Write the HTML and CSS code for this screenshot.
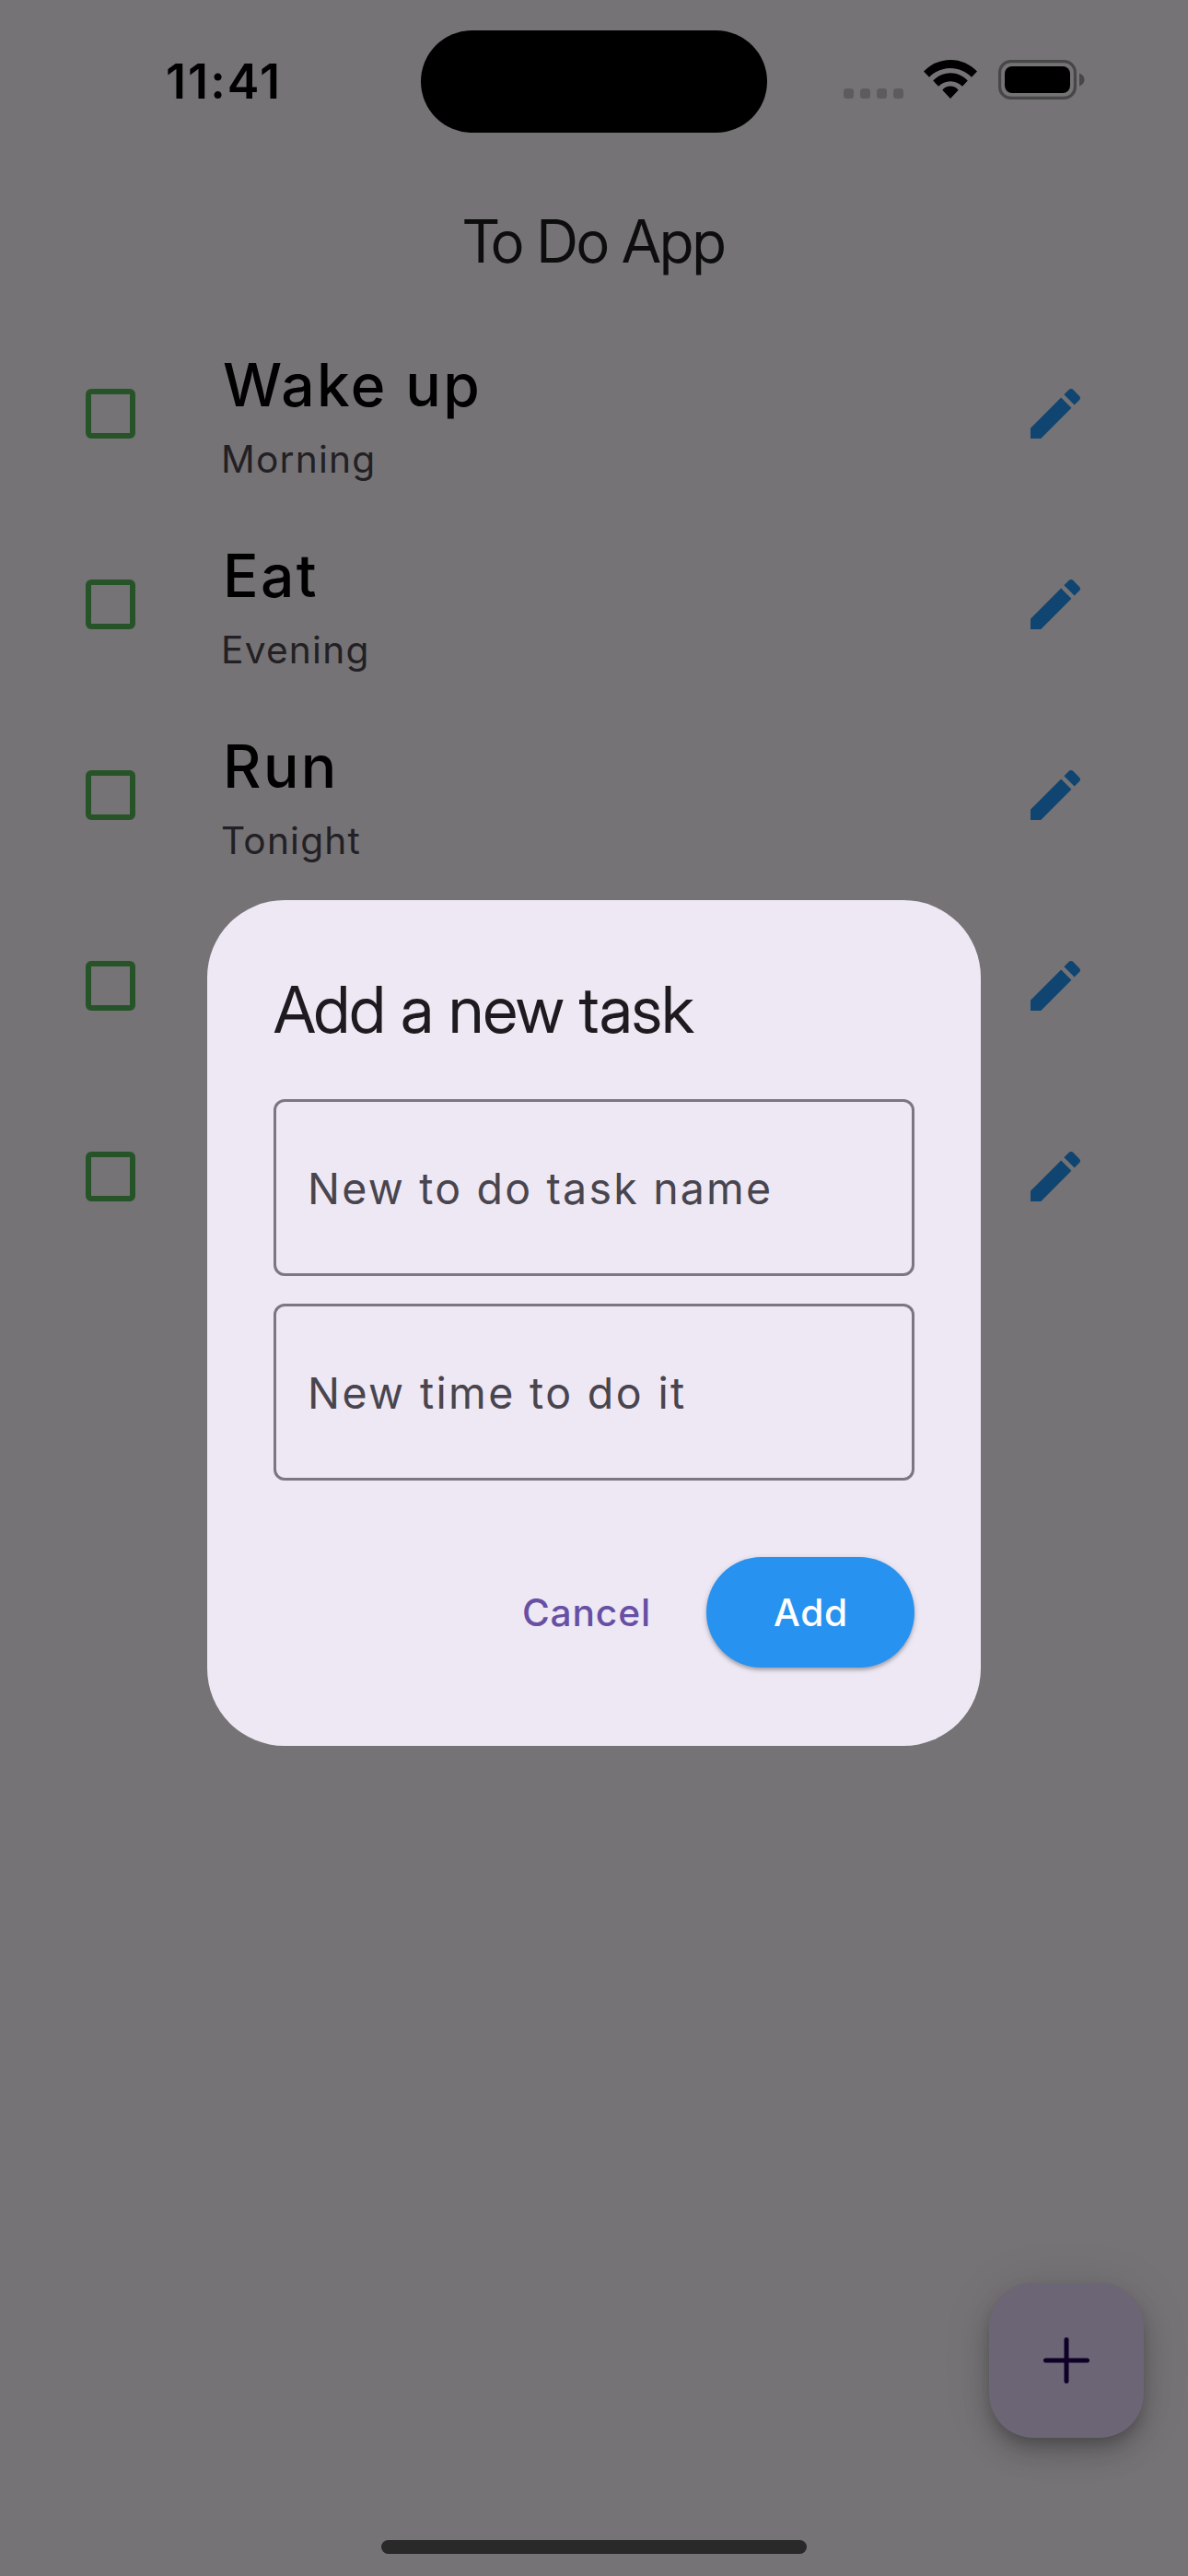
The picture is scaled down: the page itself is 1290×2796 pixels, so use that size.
FILE: index.html
```html
<!DOCTYPE html>
<html lang="en">
<head>
<meta charset="utf-8">
<title>To Do App</title>
<link rel="stylesheet" href="styles.css">
</head>
<body>
<svg class="defs" width="0" height="0" aria-hidden="true">
  <symbol id="edit" viewBox="0 0 24 24"><path d="M3 17.25V21h3.75L17.81 9.94l-3.75-3.75L3 17.25zM20.71 7.04c.39-.39.39-1.02 0-1.41l-2.34-2.34c-.39-.39-1.02-.39-1.41 0l-1.83 1.83 3.75 3.75 1.83-1.83z"/></symbol>
</svg>
<div class="screen">
  <header class="status">
    <div class="time">11:41</div>
    <div class="island"></div>
    <div class="indicators">
      <div class="dots"><i></i><i></i><i></i><i></i></div>
      <svg class="wifi" width="58" height="42" viewBox="0 0 58 42"><path d="M29 0C40.300 0 50.600 4.800 58 12.600L52 18.700C46 12.800 38 9 29 9C20 9 12 12.800 6 18.700L0 12.600C7.400 4.800 17.700 0 29 0ZM29 14.300C36.300 14.300 43 17.500 47.800 22.600L42 28.800C38.600 25.500 34.100 23.300 29 23.300C23.900 23.300 19.400 25.500 16 28.800L10.200 22.600C15 17.500 21.700 14.300 29 14.300ZM29 28.600C32.300 28.600 35.400 30 37.700 32.800L29 42L20.300 32.800C22.600 30 25.700 28.600 29 28.600Z"/></svg>
      <svg class="battery" width="95" height="43" viewBox="0 0 95 43"><rect x="1.600" y="1.600" width="81.800" height="39.800" rx="12" fill="none" stroke="#484748" stroke-width="3.200"/><rect x="7" y="7" width="71" height="29" rx="8"/><path d="M88 14.500C91.500 15.700 93.500 18.400 93.500 21.500S91.500 27.300 88 28.500Z" fill="#484748"/></svg>
    </div>
  </header>
  <h1 class="app-title">To Do App</h1>
  <main class="list">
    <div class="row"><span class="check"></span><div class="text"><div class="name">Wake up</div><div class="when">Morning</div></div><svg class="edit"><use href="#edit"/></svg></div>
    <div class="row"><span class="check"></span><div class="text"><div class="name">Eat</div><div class="when">Evening</div></div><svg class="edit"><use href="#edit"/></svg></div>
    <div class="row"><span class="check"></span><div class="text"><div class="name">Run</div><div class="when">Tonight</div></div><svg class="edit"><use href="#edit"/></svg></div>
    <div class="row"><span class="check"></span><div class="text"></div><svg class="edit"><use href="#edit"/></svg></div>
    <div class="row"><span class="check"></span><div class="text"></div><svg class="edit"><use href="#edit"/></svg></div>
  </main>
  <div class="fab"><svg width="50" height="50" viewBox="0 0 50 50"><path d="M25 2.500V47.500M2.500 25H47.500"/></svg></div>
  <div class="home"></div>

  <section class="dialog">
    <h2 class="dialog-title">Add a new task</h2>
    <div class="field">New to do task name</div>
    <div class="field second">New time to do it</div>
    <div class="actions">
      <span class="cancel">Cancel</span>
      <span class="add">Add</span>
    </div>
  </section>
</div>
</body>
</html>
```
FILE: styles.css
```css
* { box-sizing: border-box; margin: 0; }

body {
  background: #757375;
  font-family: Inter, "Liberation Sans", sans-serif;
}

.defs { display: block; position: absolute; }

.screen {
  position: relative;
  width: 1290px;
  height: 2796px;
  overflow: hidden;
  background: #757375;
}

/* Status bar */
.status {
  display: grid;
  grid-template-columns: 457px 376px 1fr;
  height: 180px;
}
.time {
  padding: 59px 0 0 180px;
  font-size: 52px;
  line-height: 60px;
  font-weight: 600;
  letter-spacing: 2.1px;
}
.island {
  height: 111px;
  margin-top: 33px;
  border-radius: 56px;
  background: #000;
}
.indicators {
  display: flex;
  align-items: flex-start;
  padding: 65px 0 0 83px;
}
.dots {
  display: flex;
  gap: 7px;
  margin: 31px 22px 0 0;
}
.dots i {
  width: 11px;
  height: 11px;
  border-radius: 3.5px;
  background: #5d5b5d;
}
.wifi { margin-right: 23px; }

/* Task list */
.app-title {
  height: 166px;
  padding: 42px 0 0;
  line-height: 80px;
  font-family: "Inter Display", Inter, sans-serif;
  font-size: 64px;
  font-weight: 400;
  letter-spacing: -.85px;
  text-align: center;
  color: #0d0d0e;
}
.row {
  display: flex;
  align-items: center;
  height: 207px;
  padding: 0 108px 1px 93px;
}
.check {
  width: 54px;
  height: 54px;
  border: 6px solid #265428;
  border-radius: 6px;
}
.text {
  flex: 1;
  padding: 2px 0 0 95px;
}
.name {
  font-size: 64px;
  line-height: 97px;
  font-weight: 500;
  letter-spacing: 2.45px;
  color: #000;
}
.when {
  margin-left: -2px;
  font-size: 40.7px;
  line-height: 65px;
  letter-spacing: 1.2px;
  color: #222024;
}
.edit {
  width: 72px;
  height: 72px;
  fill: #0f4570;
}

.fab {
  position: absolute;
  left: 1074px;
  top: 2478px;
  width: 168px;
  height: 168px;
  display: grid;
  place-items: center;
  border-radius: 48px;
  background: #6c6575;
  box-shadow: 0 9px 15px -3px rgba(0, 0, 0, .2), 0 18px 30px rgba(0, 0, 0, .14), 0 3px 54px rgba(0, 0, 0, .1);
}
.fab path {
  stroke: #0f0029;
  stroke-width: 5;
  stroke-linecap: round;
}
.home {
  position: absolute;
  left: 414px;
  top: 2757px;
  width: 462px;
  height: 15px;
  border-radius: 8px;
  background: #292929;
}

/* Dialog */
.dialog {
  position: absolute;
  left: 225px;
  top: 977px;
  width: 840px;
  height: 918px;
  padding: 71px 72px 0;
  border-radius: 84px;
  background: #eee8f4;
}
.dialog-title {
  margin-bottom: 49px;
  font-family: "Inter Display", Inter, sans-serif;
  font-size: 70px;
  line-height: 96px;
  font-weight: 400;
  letter-spacing: -.8px;
  color: #1d1b20;
  white-space: nowrap;
}
.field {
  height: 192px;
  margin-bottom: 30px;
  padding-left: 34px;
  border: 3px solid #7c7682;
  border-radius: 12px;
  font-size: 46.5px;
  line-height: 188px;
  letter-spacing: 2.19px;
  color: #49454f;
}
.second {
  margin-bottom: 83px;
  letter-spacing: 2.36px;
}
.actions {
  display: flex;
  justify-content: flex-end;
  align-items: center;
  gap: 60px;
  font-size: 40.7px;
  font-weight: 500;
}
.cancel {
  color: #6750a4;
  letter-spacing: .84px;
}
.add {
  width: 226px;
  height: 120px;
  padding-left: 1px;
  border-radius: 60px;
  background: #2792ef;
  color: #fff;
  line-height: 122px;
  letter-spacing: .66px;
  text-align: center;
  box-shadow: 0 3px 3px rgba(0, 0, 0, .15), 0 2px 6px rgba(0, 0, 0, .2);
}
```
